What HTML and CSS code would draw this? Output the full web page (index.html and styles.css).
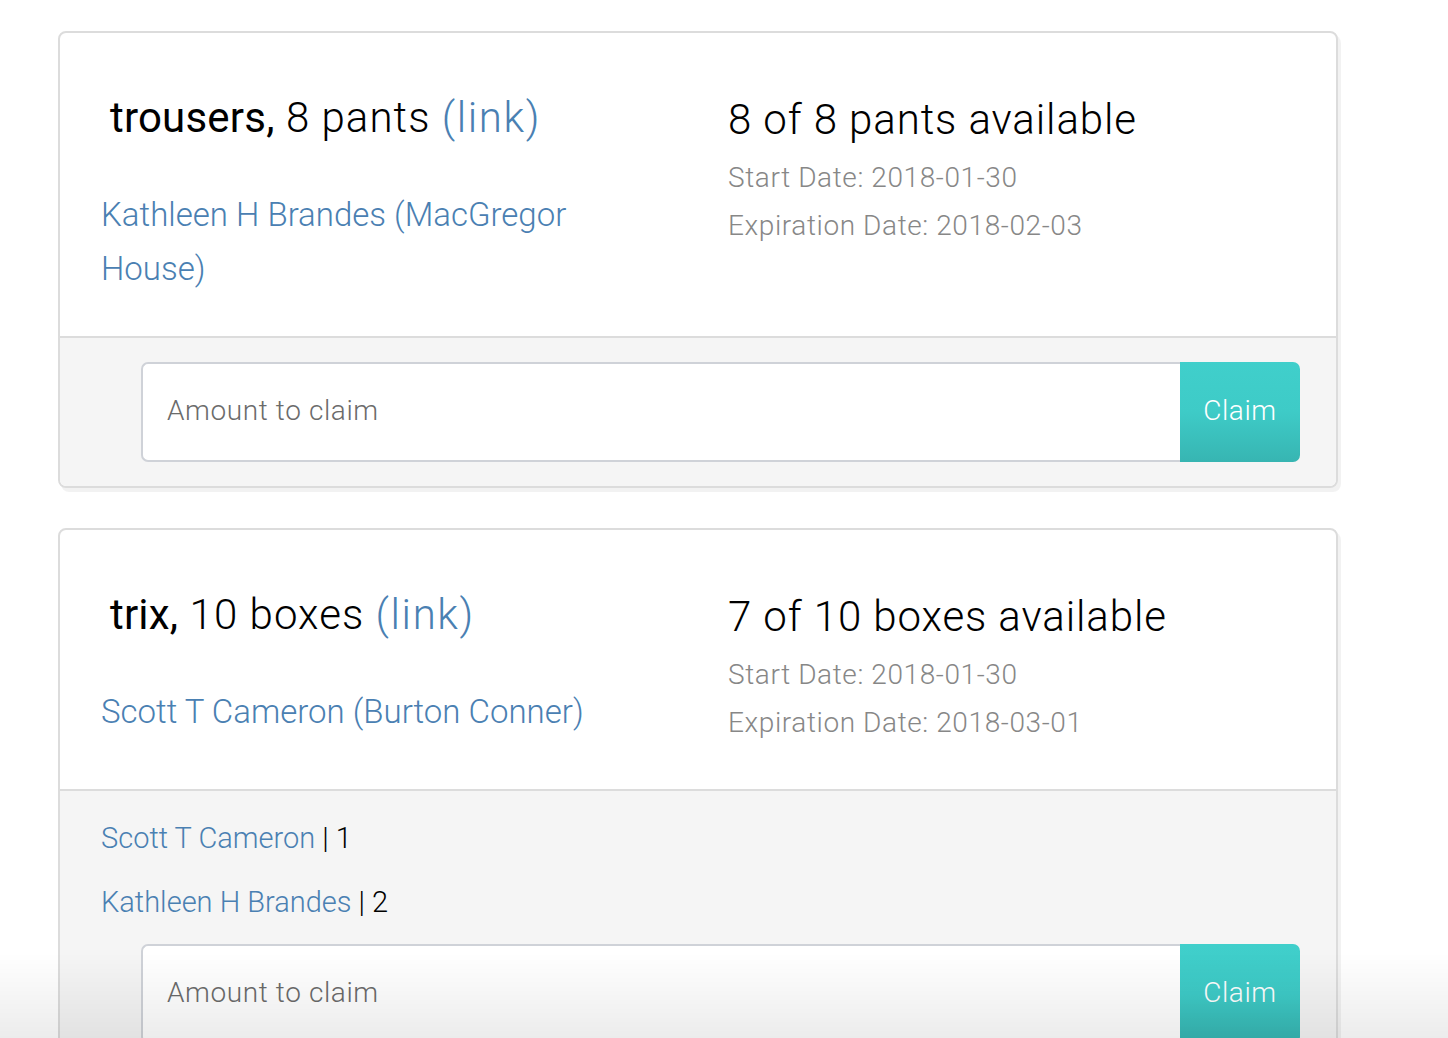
FILE: index.html
```html
<!DOCTYPE html>
<html>
<head>
<meta charset="utf-8">
<link rel="stylesheet" href="styles.css">
</head>
<body>
<div class="page">
  <div class="card">
    <div class="card-body">
      <div class="col-left">
        <h3 class="title"><span class="name">trousers,</span> 8 pants <a class="link" href="#">(link)</a></h3>
        <p class="owner"><a class="link" href="#">Kathleen H Brandes (MacGregor House)</a></p>
      </div>
      <div class="col-right">
        <h3 class="avail">8 of 8 pants available</h3>
        <p class="date">Start Date: 2018-01-30</p>
        <p class="date">Expiration Date: 2018-02-03</p>
      </div>
    </div>
    <div class="card-footer">
      <div class="input-group">
        <input class="amount" type="text" placeholder="Amount to claim">
        <button class="claim">Claim</button>
      </div>
    </div>
  </div>

  <div class="card">
    <div class="card-body">
      <div class="col-left">
        <h3 class="title"><span class="name">trix,</span> 10 boxes <a class="link" href="#">(link)</a></h3>
        <p class="owner"><a class="link" href="#">Scott T Cameron (Burton Conner)</a></p>
      </div>
      <div class="col-right">
        <h3 class="avail">7 of 10 boxes available</h3>
        <p class="date">Start Date: 2018-01-30</p>
        <p class="date">Expiration Date: 2018-03-01</p>
      </div>
    </div>
    <div class="card-footer">
      <ul class="claims">
        <li><a class="link" href="#">Scott T Cameron</a> | 1</li>
        <li><a class="link" href="#">Kathleen H Brandes</a> | 2</li>
      </ul>
      <div class="input-group">
        <input class="amount" type="text" placeholder="Amount to claim">
        <button class="claim">Claim</button>
      </div>
    </div>
  </div>
</div>
<div class="fade"></div>
</body>
</html>
```

FILE: styles.css
```css
* { box-sizing: border-box; }
html, body {
  margin: 0;
  padding: 0;
  background: #fff;
  font-family: Roboto, "Liberation Sans", sans-serif;
  font-weight: 300;
  color: #111;
}
.page {
  padding: 31px 0 0 58px;
  width: 1348px;
}
.card {
  width: 1280px;
  border: 2px solid #dcdcdc;
  border-radius: 8px;
  box-shadow: 3px 4px 0 rgba(0,0,0,0.05);
  margin-bottom: 40px;
  overflow: hidden;
  background: #fff;
}
.card-body {
  display: flex;
  padding: 62px 0 40px 41px;
  border-bottom: 2px solid #dcdcdc;
}
.col-left {
  width: 627px;
  flex: none;
}
.col-right {
  flex: 1;
  padding-top: 2px;
  padding-bottom: 2px;
}
.title, .avail {
  margin: 0;
  font-size: 42px;
  line-height: 46px;
  font-weight: 300;
  color: #000;
  letter-spacing: 0.9px;
}
.title {
  padding-left: 9px;
  letter-spacing: 1.05px;
}
.title .link {
  letter-spacing: 1.6px;
}
.name {
  font-weight: 400;
  letter-spacing: 0.2px;
}
.link {
  color: #4a80b2;
  text-decoration: none;
}
.owner {
  margin: 47px 0 0;
  font-size: 33px;
  line-height: 54px;
  width: 500px;
  letter-spacing: 0;
}
.date {
  margin: 0;
  font-size: 28px;
  line-height: 48px;
  color: #878787;
  letter-spacing: 0.6px;
}
.avail + .date {
  margin-top: 11px;
}
.card-footer {
  background: #f5f5f5;
  padding: 24px 36px 24px 81px;
}
.claims {
  list-style: none;
  margin: 3px 0 22px -40px;
  padding: 0;
  font-size: 29px;
  line-height: 40px;
  color: #000;
}
.claims li + li {
  margin-top: 24px;
}
.input-group {
  display: flex;
  height: 100px;
}
.amount {
  flex: 1;
  height: 100px;
  border: 2px solid #cfd2d8;
  border-right: none;
  border-radius: 7px 0 0 7px;
  padding: 0 0 4px 24px;
  font-family: Roboto, "Liberation Sans", sans-serif;
  font-weight: 300;
  font-size: 28px;
  letter-spacing: 0.6px;
  color: #333;
  background: #fff;
  outline: none;
}
.amount::placeholder {
  color: #6b6b6b;
}
.claim {
  width: 120px;
  height: 100px;
  border: none;
  border-radius: 0 7px 7px 0;
  background: linear-gradient(to bottom, #40cfcb 0%, #3ecbc7 50%, #37b5b2 100%);
  color: #fff;
  font-family: Roboto, "Liberation Sans", sans-serif;
  font-weight: 300;
  font-size: 28px;
  letter-spacing: 0.6px;
  padding: 0 0 4px;
}
.fade {
  position: fixed;
  left: 0;
  right: 0;
  bottom: 0;
  height: 85px;
  background: linear-gradient(to bottom, rgba(0,0,0,0) 0%, rgba(0,0,0,0.075) 100%);
  pointer-events: none;
}
```
